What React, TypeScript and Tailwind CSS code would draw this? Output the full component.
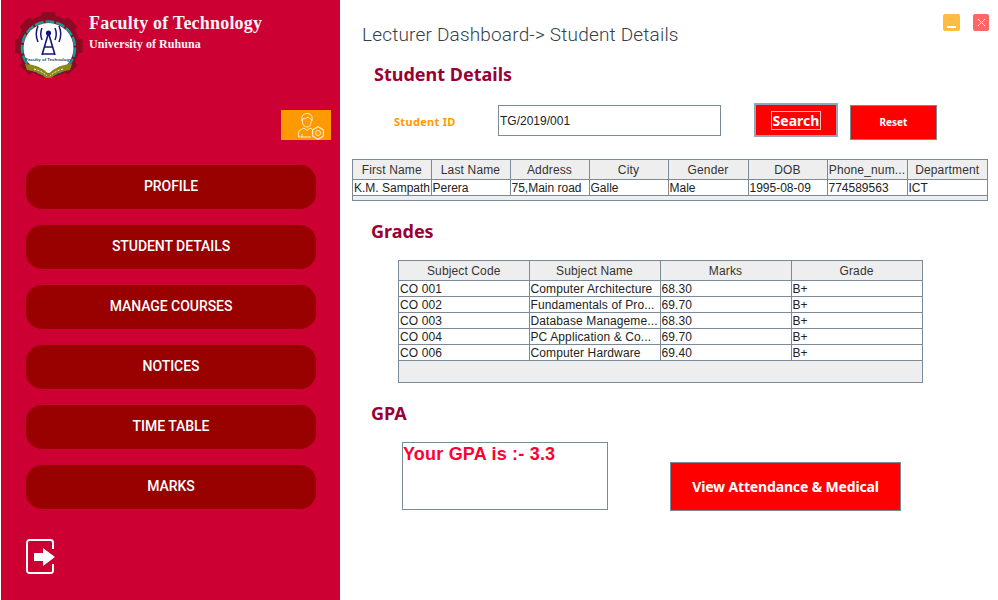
const navItems = ["PROFILE", "STUDENT DETAILS", "MANAGE COURSES", "NOTICES", "TIME TABLE", "MARKS"];

const studentHead = ["First Name", "Last Name", "Address", "City", "Gender", "DOB", "Phone_num...", "Department"];
const studentRow = ["K.M. Sampath", "Perera", "75,Main road", "Galle", "Male", "1995-08-09", "774589563", "ICT"];
const studentCols = ["w-[78px]", "w-[79px]", "w-[79px]", "w-[79px]", "w-[80px]", "w-[79px]", "w-[80px]", "w-[80px]"];

const gradeHead = ["Subject Code", "Subject Name", "Marks", "Grade"];
const gradeCols = ["w-[130px]", "w-[131px]", "w-[131px]", "w-[131px]"];
const gradeRows = [
  ["CO 001", "Computer Architecture", "68.30", "B+"],
  ["CO 002", "Fundamentals of Pro...", "69.70", "B+"],
  ["CO 003", "Database Manageme...", "68.30", "B+"],
  ["CO 004", "PC Application & Co...", "69.70", "B+"],
  ["CO 006", "Computer Hardware", "69.40", "B+"],
];

const Logo = () => (
  <svg width="68" height="68" viewBox="0 0 68 68" className="shrink-0">
    {/* gear teeth */}
    {[0, 45, 90, 135, 225, 270, 315].map((a) => (
      <rect key={a} x="26.5" y="1" width="14" height="10" rx="1.5" fill="#8c0a22" transform={`rotate(${a} 33.5 35)`} />
    ))}
    <circle cx="33.5" cy="35" r="31" fill="#8c0a22" />
    <circle cx="33.5" cy="37" r="26.5" fill="none" stroke="#17989a" strokeWidth="2.5" strokeDasharray="9 2" />
    <circle cx="33.5" cy="37" r="25" fill="#ffffff" />
    {/* antenna */}
    <path d="M33.5 22 L27 44 M33.5 22 L40 44 M30 36 H37 M28 43 H39" stroke="#14147a" strokeWidth="1.6" fill="none" />
    <circle cx="33.5" cy="22" r="2.6" fill="#14147a" />
    <path d="M27 17 Q24.5 23 27 29 M40 17 Q42.5 23 40 29 M23 15 Q19.5 23 23 31 M44 15 Q47.5 23 44 31" stroke="#14147a" strokeWidth="1.5" fill="none" />
    <text x="33.5" y="50" textAnchor="middle" fontSize="4.4" fontWeight="700" fill="#124a5a" fontFamily="Liberation Sans, sans-serif">
      Faculty of Technology
    </text>
    {/* laurel */}
    <path d="M10 53 Q24 53 33.5 63 Q43 53 57 53 L55 59 Q44 60 36 67 H31 Q23 60 12 59 Z" fill="#8a8a1a" />
    <path d="M19 58 Q27 60 32 65 M48 58 Q40 60 35 65" stroke="#ffffff" strokeWidth="1" fill="none" strokeDasharray="2 1.5" />
  </svg>
);

const LecturerIcon = () => (
  <svg width="26" height="27" viewBox="0 0 26 27" fill="none" stroke="#ffe9c4" strokeWidth="1">
    <path d="M4 8 C3 2 6 0.5 9 0.5 C12 0.5 15 2 14 8" />
    <path d="M4.5 6 C7 6 9 5 10 4 C11 5 12.5 6 13.5 6 L13 10 C12.5 12.5 11 14 9 14 C7 14 5 12.5 4.5 10 Z" />
    <path d="M0.5 24 V20 C0.5 17.5 3 16.5 6 15 L9 17.5 L12 15 L14 16" />
    <path d="M0.5 24 H13 M4 24 V21" />
    <path d="M20 13.8 L25.4 16.9 V23.1 L20 26.2 L14.6 23.1 V16.9 Z" strokeWidth="1.3" />
    <circle cx="20" cy="20" r="2.5" />
  </svg>
);

const LogoutIcon = () => (
  <svg width="30" height="36" viewBox="0 0 30 36">
    <path d="M27 10 V3.5 A2.5 2.5 0 0 0 24.5 1 H3.5 A2.5 2.5 0 0 0 1 3.5 V31.5 A2.5 2.5 0 0 0 3.5 34 H24.5 A2.5 2.5 0 0 0 27 31.5 V25" fill="none" stroke="#ffffff" strokeWidth="2" />
    <path d="M8 14 H17 V9 L29 18 L17 27 V22 H8 Z" fill="#ffffff" />
  </svg>
);

export default function App() {
  return (
    <div className="flex h-[600px] w-[998px] overflow-hidden bg-white font-['Liberation_Sans',sans-serif]">
      <aside className="ml-px flex h-full w-[339px] shrink-0 flex-col bg-[#cc0033]">
        <div className="flex h-[110px] pl-[14px] pt-[11px]">
          <Logo />
          <div className="ml-[6px] font-['Liberation_Serif',serif] font-bold text-[#fff2f5]">
            <div className="mt-[2px] text-[18px] leading-[21px] tracking-[0.2px]">Faculty of Technology</div>
            <div className="mt-[2px] text-[12px] leading-[16px] tracking-[0.05px]">University of Ruhuna</div>
          </div>
        </div>
        <div className="flex justify-end pr-[9px]">
          <div className="flex h-[30px] w-[50px] items-end justify-start bg-[#ff9900] pl-[17px]">
            <LecturerIcon />
          </div>
        </div>
        <nav className="mt-[25px] flex flex-col gap-4 px-[25px]">
          {navItems.map((item) => (
            <div
              key={item}
              className="flex h-[44px] w-[290px] items-center justify-center rounded-[16px] bg-[#990000] pb-[2px] font-['Roboto',sans-serif] text-[14px] font-medium tracking-[-0.05px] text-white"
            >
              {item}
            </div>
          ))}
        </nav>
        <div className="ml-[25px] mt-[30px]">
          <LogoutIcon />
        </div>
      </aside>

      <main className="flex w-[658px] flex-col">
        <div className="flex h-[60px] justify-between pl-[22px] pr-[9px] pt-[14px]">
          <h1 className="mt-[9px] font-['Roboto',sans-serif] text-[19px] font-light leading-[24px] tracking-[0.18px] text-[#33414d]">
            Lecturer Dashboard-&gt; Student Details
          </h1>
          <div className="flex gap-[13px]">
            <div className="flex h-[17px] w-[17px] items-end justify-center rounded-[2px] bg-[#ffbb44] pb-[3px]">
              <div className="h-[2px] w-[9px] bg-white" />
            </div>
            <div className="flex h-[17px] w-[16px] items-center justify-center rounded-[2px] bg-[#ff6666]">
              <svg width="9" height="9" viewBox="0 0 9 9" stroke="#ffe8e8" strokeWidth="1">
                <path d="M1 1 L8 8 M8 1 L1 8" />
              </svg>
            </div>
          </div>
        </div>

        <h2 className="ml-[34px] h-[30px] font-['Noto_Sans',sans-serif] text-[18px] font-bold leading-[28px] text-[#990033]">
          Student Details
        </h2>

        <div className="mt-[13px] flex h-[37px] items-start">
          <div className="ml-[54px] mt-[11px] w-[104px] font-['Noto_Sans',sans-serif] text-[11px] font-bold leading-[15px] tracking-[0.3px] text-[#ff9900]">
            Student ID
          </div>
          <div className="mt-[2px] flex h-[31px] w-[223px] items-center border border-[#7a8a99] pl-px pt-px text-[12px] text-[#222222]">
            TG/2019/001
          </div>
          <button className="ml-[33px] flex h-[34px] w-[84px] items-center justify-center border-2 border-[#8fa8c0] bg-[#ff0000] font-['Noto_Sans',sans-serif] text-[14px] font-bold text-white">
            <span className="border border-[#d9c8c8] px-px leading-[17px]">Search</span>
          </button>
          <button className="ml-[12px] mt-[2px] flex h-[35px] w-[87px] items-center justify-center border border-[#7a8a99] bg-[#ff0000] font-['Noto_Sans',sans-serif] text-[10px] font-bold text-white">
            Reset
          </button>
        </div>

        <div className="ml-[12px] mt-[19px] h-[42px] w-[636px] border border-[#7a8a99] bg-[#eeeeee]">
          <table className="w-full table-fixed border-collapse text-[12px] text-[#333333]">
            <colgroup>
              {studentCols.map((w, i) => (
                <col key={i} className={w} />
              ))}
            </colgroup>
            <thead>
              <tr className="h-[19px] bg-[#eeeeee]">
                {studentHead.map((h) => (
                  <th key={h} className="overflow-hidden whitespace-nowrap border-b border-r border-[#7a8a99] p-0 pt-px text-center font-normal leading-none tracking-[0.15px] last:border-r-0">
                    {h}
                  </th>
                ))}
              </tr>
            </thead>
            <tbody>
              <tr className="h-[16px] bg-white">
                {studentRow.map((c) => (
                  <td key={c} className="overflow-hidden whitespace-nowrap border-b border-r border-[#7a8a99] px-px py-0 pt-px leading-none text-[#222222] last:border-r-0">
                    {c}
                  </td>
                ))}
              </tr>
            </tbody>
          </table>
        </div>

        <h2 className="ml-[31px] mt-[15px] h-[30px] font-['Noto_Sans',sans-serif] text-[18px] font-bold leading-[30px] text-[#990033]">
          Grades
        </h2>

        <div className="ml-[58px] mt-[14px] h-[123px] w-[525px] border border-[#7a8a99] bg-[#eeeeee]">
          <table className="w-full table-fixed border-collapse text-[12px] tracking-[0.12px] text-[#333333]">
            <colgroup>
              {gradeCols.map((w, i) => (
                <col key={i} className={w} />
              ))}
            </colgroup>
            <thead>
              <tr className="h-[19px]">
                {gradeHead.map((h) => (
                  <th key={h} className="border-b border-r border-[#7a8a99] p-0 pt-px text-center font-normal leading-none">
                    {h}
                  </th>
                ))}
              </tr>
            </thead>
            <tbody>
              {gradeRows.map((row) => (
                <tr key={row[0]} className="h-[16px] bg-white">
                  {row.map((c, i) => (
                    <td key={i} className="overflow-hidden whitespace-nowrap border-b border-r border-[#7a8a99] px-px py-0 pt-px leading-none text-[#222222]">
                      {c}
                    </td>
                  ))}
                </tr>
              ))}
            </tbody>
          </table>
        </div>

        <h2 className="ml-[31px] mt-[16px] h-[30px] font-['Noto_Sans',sans-serif] text-[18px] font-bold leading-[28px] text-[#990033]">
          GPA
        </h2>

        <div className="mt-[13px] flex items-start">
          <div className="ml-[62px] h-[68px] w-[206px] border border-[#7a8a99] text-[18px] font-bold leading-[22px] tracking-[0.2px] text-[#ff0033]">
            Your GPA is :- 3.3
          </div>
          <button className="ml-[62px] mt-[20px] flex h-[49px] w-[231px] items-center justify-center border border-[#7a8a99] bg-[#ff0000] font-['Noto_Sans',sans-serif] text-[14px] font-bold tracking-[-0.15px] text-white">
            View Attendance &amp; Medical
          </button>
        </div>
      </main>
    </div>
  );
}
